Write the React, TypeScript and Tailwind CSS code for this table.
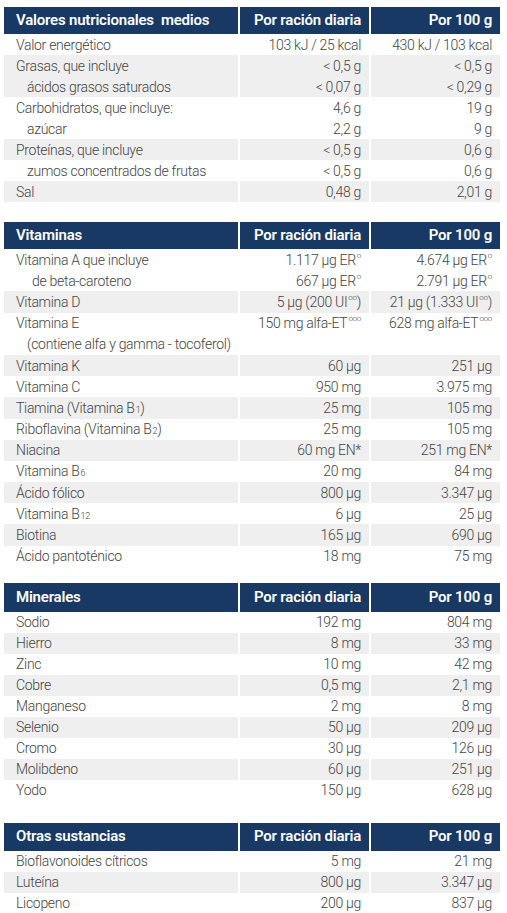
import type { ReactNode } from "react";

type Row = {
  label: ReactNode;
  indent?: 0 | 1 | 2;
  a?: ReactNode;
  b?: ReactNode;
  gray?: boolean;
};

type Section = {
  title: ReactNode;
  rows: Row[];
  gapAfter: string;
  headH: string;
  rowH: string;
};

const Sup = ({ children }: { children: ReactNode }) => (
  <sup className="ml-[1px] text-[8px] leading-none">{children}</sup>
);

const Sub = ({ children }: { children: ReactNode }) => (
  <sub className="ml-[1px] text-[9px] leading-none">{children}</sub>
);

const sections: Section[] = [
  {
    title: <>Valores nutricionales&nbsp; medios</>,
    gapAfter: "mb-[20px]",
    headH: "h-[27px]",
    rowH: "h-[21px]",
    rows: [
      { label: "Valor energético", a: "103 kJ / 25 kcal", b: "430 kJ / 103 kcal" },
      { label: "Grasas, que incluye", a: "< 0,5 g", b: "< 0,5 g", gray: true },
      { label: "ácidos grasos saturados", indent: 1, a: "< 0,07 g", b: "< 0,29 g", gray: true },
      { label: "Carbohidratos, que incluye:", a: "4,6 g", b: "19 g" },
      { label: "azúcar", indent: 1, a: "2,2 g", b: "9 g" },
      { label: "Proteínas, que incluye", a: "< 0,5 g", b: "0,6 g", gray: true },
      { label: "zumos concentrados de frutas", indent: 1, a: "< 0,5 g", b: "0,6 g" },
      { label: "Sal", a: "0,48 g", b: "2,01 g", gray: true },
    ],
  },
  {
    title: "Vitaminas",
    gapAfter: "mb-[16px]",
    headH: "h-[27px]",
    rowH: "h-[21.2px]",
    rows: [
      { label: "Vitamina A que incluye", a: <>1.117 µg ER<Sup>o</Sup></>, b: <>4.674 µg ER<Sup>o</Sup></> },
      { label: "de beta-caroteno", indent: 2, a: <>667 µg ER<Sup>o</Sup></>, b: <>2.791 µg ER<Sup>o</Sup></> },
      { label: "Vitamina D", a: <>5 µg (200 UI<Sup>oo</Sup>)</>, b: <>21 µg (1.333 UI<Sup>oo</Sup>)</>, gray: true },
      { label: "Vitamina E", a: <>150 mg alfa-ET<Sup>ooo</Sup></>, b: <>628 mg alfa-ET<Sup>ooo</Sup></> },
      { label: "(contiene alfa y gamma - tocoferol)", indent: 1 },
      { label: "Vitamina K", a: "60 µg", b: "251 µg", gray: true },
      { label: "Vitamina C", a: "950 mg", b: "3.975 mg" },
      { label: <>Tiamina (Vitamina B<Sub>1</Sub>)</>, a: "25 mg", b: "105 mg", gray: true },
      { label: <>Riboflavina (Vitamina B<Sub>2</Sub>)</>, a: "25 mg", b: "105 mg" },
      { label: "Niacina", a: "60 mg EN*", b: "251 mg EN*", gray: true },
      { label: <>Vitamina B<Sub>6</Sub></>, a: "20 mg", b: "84 mg" },
      { label: "Ácido fólico", a: "800 µg", b: "3.347 µg", gray: true },
      { label: <>Vitamina B<Sub>12</Sub></>, a: "6 µg", b: "25 µg" },
      { label: "Biotina", a: "165 µg", b: "690 µg", gray: true },
      { label: "Ácido pantoténico", a: "18 mg", b: "75 mg" },
    ],
  },
  {
    title: "Minerales",
    gapAfter: "mb-[22px]",
    headH: "h-[29px]",
    rowH: "h-[21px]",
    rows: [
      { label: "Sodio", a: "192 mg", b: "804 mg" },
      { label: "Hierro", a: "8 mg", b: "33 mg", gray: true },
      { label: "Zinc", a: "10 mg", b: "42 mg" },
      { label: "Cobre", a: "0,5 mg", b: "2,1 mg", gray: true },
      { label: "Manganeso", a: "2 mg", b: "8 mg" },
      { label: "Selenio", a: "50 µg", b: "209 µg", gray: true },
      { label: "Cromo", a: "30 µg", b: "126 µg" },
      { label: "Molibdeno", a: "60 µg", b: "251 µg", gray: true },
      { label: "Yodo", a: "150 µg", b: "628 µg" },
    ],
  },
  {
    title: "Otras sustancias",
    gapAfter: "",
    headH: "h-[28px]",
    rowH: "h-[21px]",
    rows: [
      { label: "Bioflavonoides cítricos", a: "5 mg", b: "21 mg" },
      { label: "Luteína", a: "800 µg", b: "3.347 µg", gray: true },
      { label: "Licopeno", a: "200 µg", b: "837 µg" },
    ],
  },
];

const indentClass = ["pl-[12px]", "pl-[23px]", "pl-[28px]"];

function NutrientTable({ section }: { section: Section }) {
  const head = `flex ${section.headH} items-center bg-[#173963] text-[15px] font-semibold tracking-[-0.2px] text-white`;
  return (
    <div className={`grid grid-cols-[234px_129px_129px] gap-x-[2px] ${section.gapAfter}`}>
      {/* header row */}
      <div className={`${head} pl-[12px]`}>{section.title}</div>
      <div className={`${head} justify-end pr-[8px]`}>Por ración diaria</div>
      <div className={`${head} justify-end pr-[8px]`}>Por 100 g</div>

      {section.rows.map((row, i) => {
        const cell = `flex ${section.rowH} items-center whitespace-nowrap ${row.gray ? "bg-[#efefef]" : "bg-white"}`;
        return (
          <div key={i} className="contents">
            <div className={`${cell} ${indentClass[row.indent ?? 0]}`}>{row.label}</div>
            <div className={`${cell} justify-end pr-[8px]`}>{row.a}</div>
            <div className={`${cell} justify-end pr-[8px]`}>{row.b}</div>
          </div>
        );
      })}
    </div>
  );
}

export default function App() {
  return (
    <div className="min-h-[913px] w-[507px] bg-white px-[4px] pt-[7px] font-['Roboto',sans-serif] text-[14px] font-light leading-none tracking-[-0.3px] text-[#444444]">
      {sections.map((s, i) => (
        <NutrientTable key={i} section={s} />
      ))}
    </div>
  );
}
